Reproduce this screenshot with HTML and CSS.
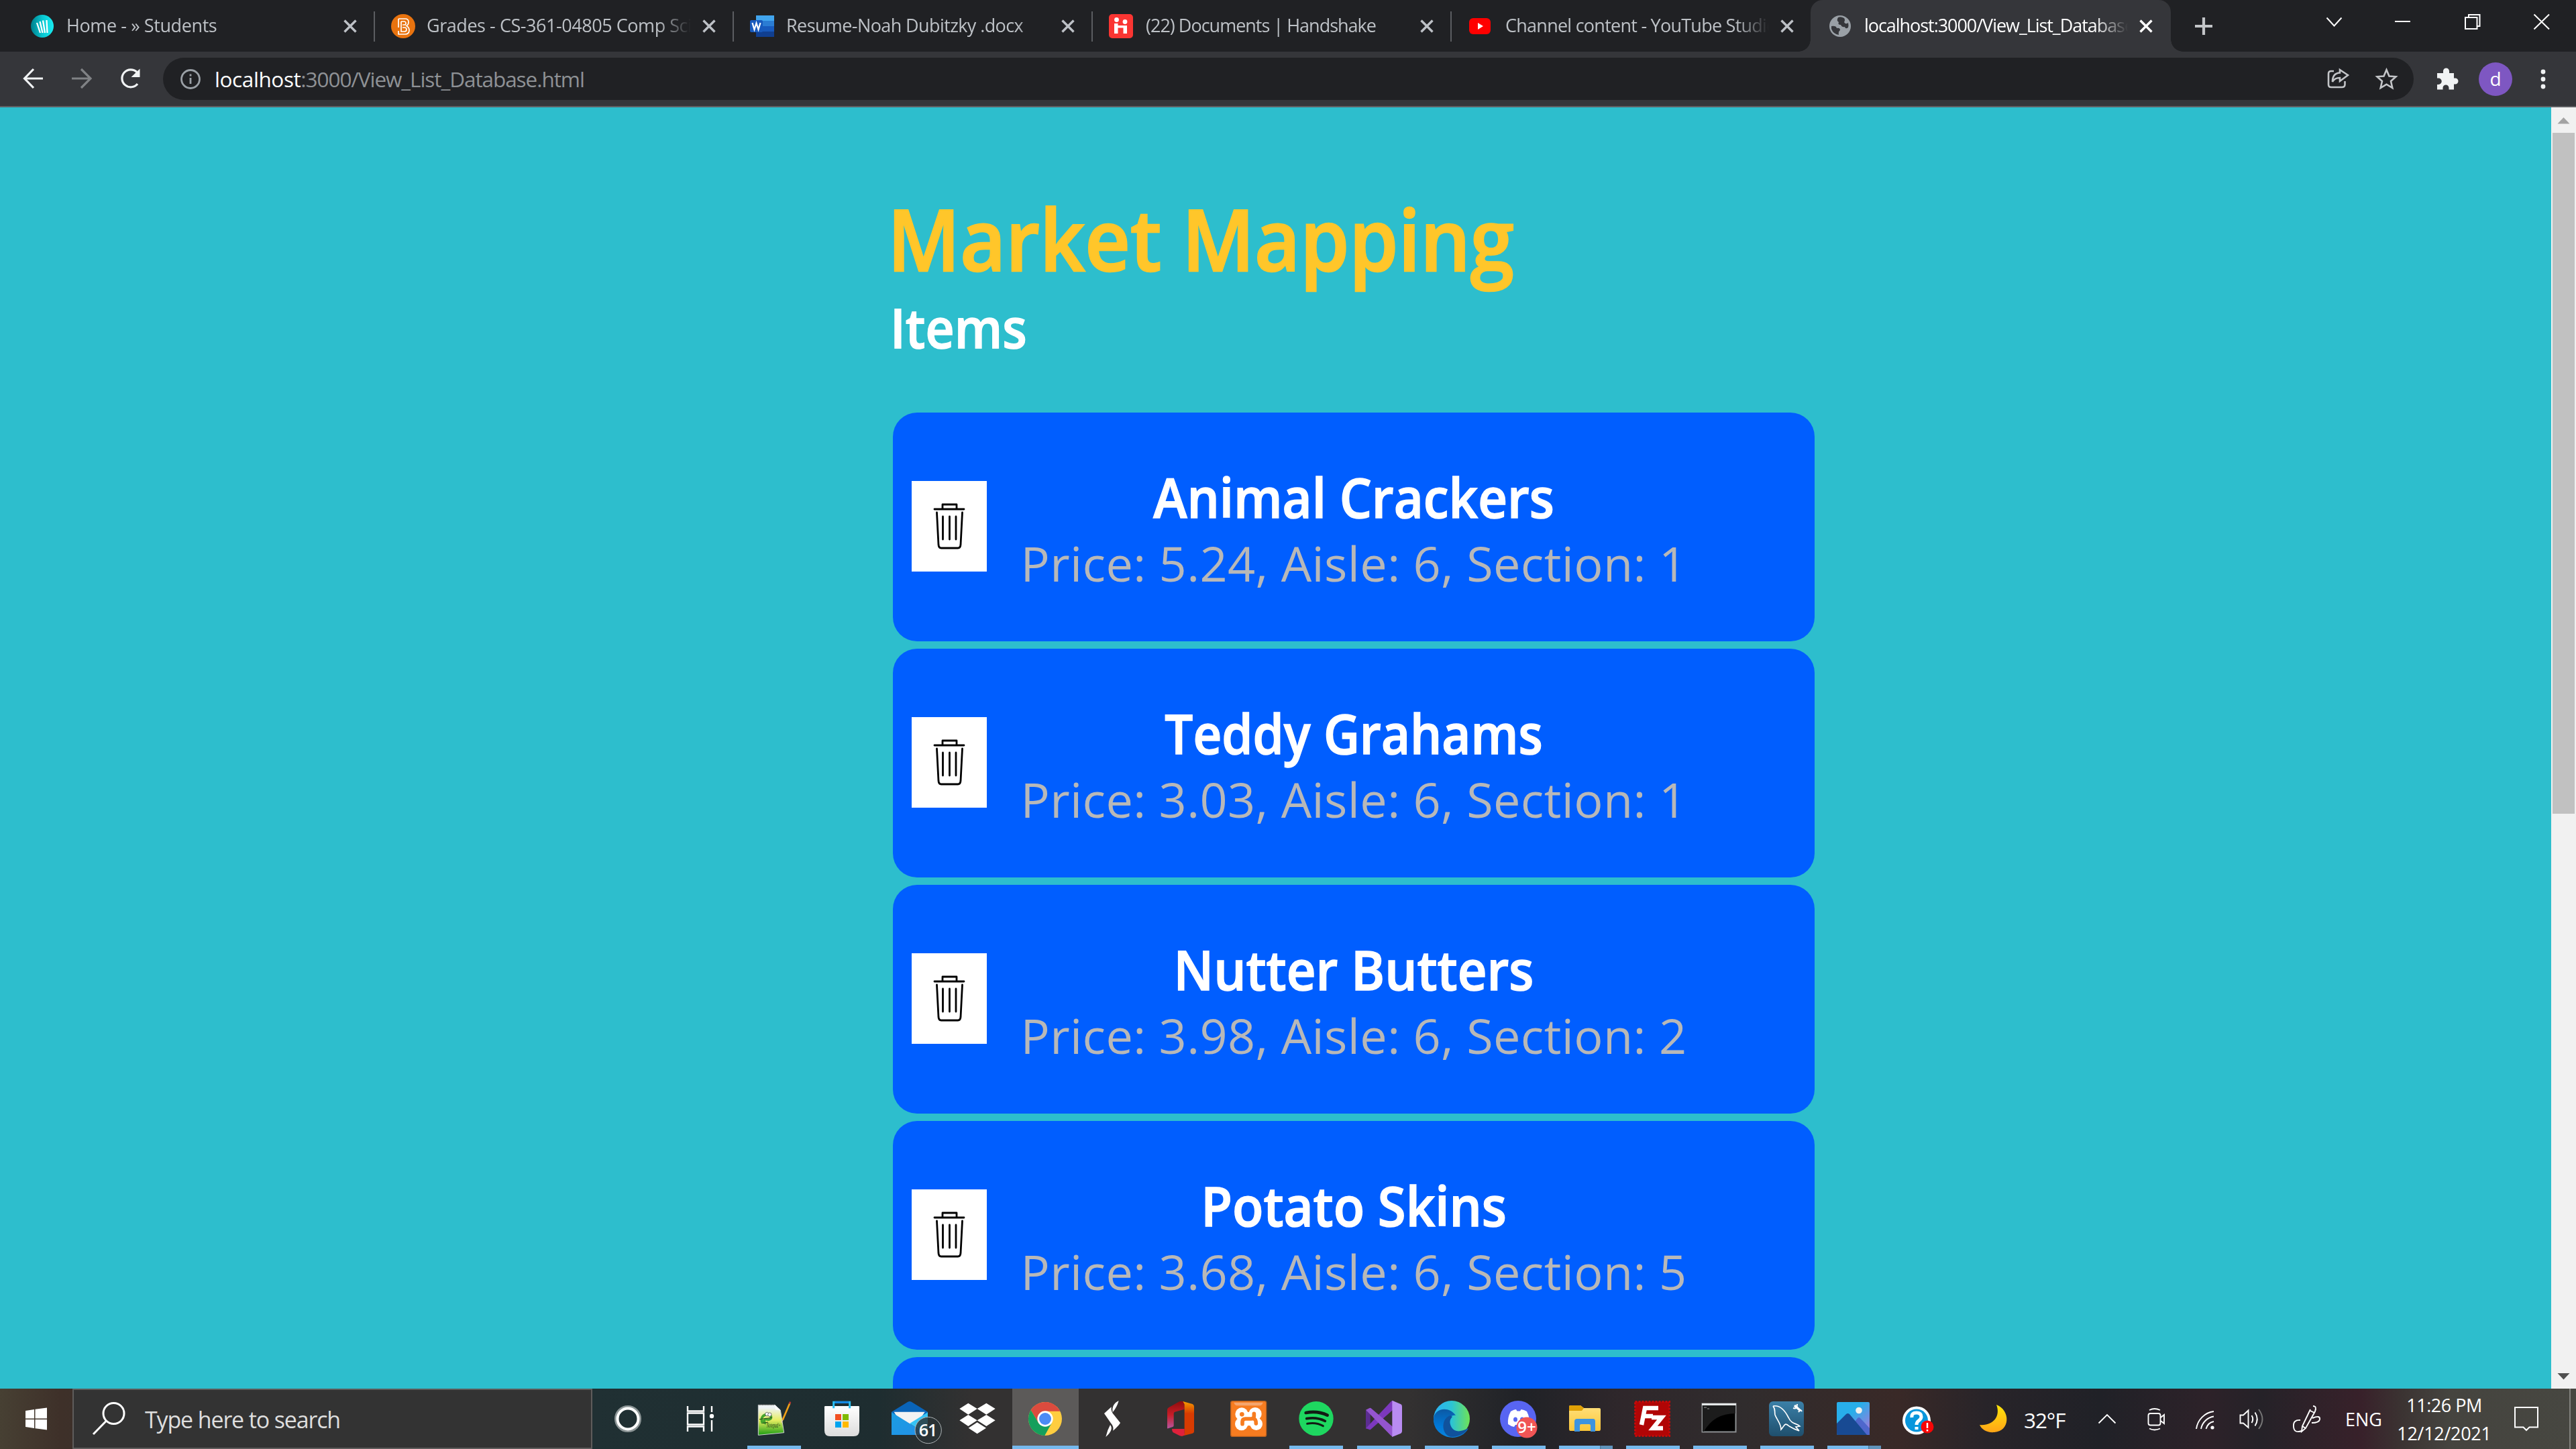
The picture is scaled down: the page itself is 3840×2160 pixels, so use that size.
FILE: index.html
```html
<!DOCTYPE html>
<html lang="en">
<head>
<meta charset="utf-8">
<title>localhost:3000/View_List_Database.html</title>
<link rel="stylesheet" href="styles.css">
</head>
<body>
<svg class="defs" width="0" height="0">
  <defs>
    <symbol id="close" viewBox="0 0 26 26"><path d="M4.500 4.500L21.500 21.500M21.500 4.500L4.500 21.500" stroke="currentColor" stroke-width="3.400"/></symbol>
    <symbol id="trash" viewBox="0 0 112 135"><g fill="none" stroke="#000" stroke-linecap="round" stroke-linejoin="round" stroke-width="2.800"><path d="M34 42H78M46 41V35H67V41" /><path d="M37.500 47L40 95Q40.500 100 44 100H69Q72.500 100 73 95L75.500 47"/><path d="M46.500 53V87M56.500 53V87M66 53V87"/></g></symbol>
    <linearGradient id="gTeal" x2="1"><stop offset="0" stop-color="#007f8c"/><stop offset=".5" stop-color="#08c5cf"/><stop offset="1" stop-color="#19edf2"/></linearGradient>
    <linearGradient id="gBag" x2="0" y2="1"><stop stop-color="#fff"/><stop offset="1" stop-color="#dcdcdc"/></linearGradient>
    <linearGradient id="gNote" x2="0" y2="1"><stop offset=".1" stop-color="#eef3f5"/><stop offset=".5" stop-color="#e7ee62"/><stop offset="1" stop-color="#1b9d12"/></linearGradient>
    <linearGradient id="gMail" x2="1" y2="1"><stop stop-color="#1b9de2"/><stop offset="1" stop-color="#2390e8"/></linearGradient>
    <linearGradient id="gOffice" x2="0" y2="1"><stop stop-color="#8e0d0d"/><stop offset=".5" stop-color="#c81d28"/><stop offset="1" stop-color="#b6569f"/></linearGradient>
    <linearGradient id="gOffice2" x2="0" y2="1"><stop stop-color="#f59a00"/><stop offset=".35" stop-color="#d83b01"/></linearGradient>
    <linearGradient id="gEdge" x2="1" y2="0"><stop stop-color="#2bb1f5"/><stop offset=".5" stop-color="#2cc3d4"/><stop offset="1" stop-color="#6fe356"/></linearGradient>
    <linearGradient id="gEdge2" x2="0" y2="1"><stop stop-color="#0c59a4"/><stop offset=".6" stop-color="#0078d7"/><stop offset="1" stop-color="#0a84dd"/></linearGradient>
    <linearGradient id="gSea" x2="0" y2="1"><stop stop-color="#3b80a8"/><stop offset="1" stop-color="#1f4f6d"/></linearGradient>
    <linearGradient id="gSky" x2="1" y2="1"><stop offset=".4" stop-color="#28aeea"/><stop offset="1" stop-color="#b172d8"/></linearGradient>
    <linearGradient id="gMoon" x2="0" y2="1"><stop stop-color="#ffe60a"/><stop offset="1" stop-color="#ffa417"/></linearGradient>
    <linearGradient id="gFolder" x2="0" y2="1"><stop stop-color="#ffe07d"/><stop offset="1" stop-color="#fcc739"/></linearGradient>
  </defs>
</svg>

<header class="browser">
  <div class="tabstrip">
    <div class="tab tab-first">
      <svg class="favicon" viewBox="0 0 36 36"><circle cx="17" cy="18" r="17" fill="url(#gTeal)"/><path d="M14 28L9 13M17.500 28L13.500 11M21 28L18 9.500M24.500 28L23.500 9" stroke="#fff" stroke-width="2.300"/></svg>
      <span class="title t-home">Home - » Students</span>
      <svg class="x"><use href="#close"/></svg>
    </div>
    <div class="tab">
      <svg class="favicon" viewBox="0 0 36 36"><circle cx="18" cy="18" r="18" fill="#e8730f"/><path d="M11 7H21Q26 7 26 12Q26 16 23 17.500Q27 20 27 24Q27 30 21 30H11V25M11 7V20M15 11V26H20Q23 26 23 23Q23 20 20 20H17M15 11H20Q22 11.500 22 13.500Q22 16 20 16H17" fill="none" stroke="#fff" stroke-width="1.700"/></svg>
      <span class="title t-grades">Grades - CS-361-04805 Comp Sci</span>
      <svg class="x"><use href="#close"/></svg>
    </div>
    <div class="tab">
      <svg class="favicon" viewBox="0 0 36 36"><path fill="#41a5ee" d="M9 2H36V10H9z"/><path fill="#2b7cd3" d="M9 10H36V18H9z"/><path fill="#185abd" d="M9 18H36V26H9z"/><path fill="#103f91" d="M9 26H36V34H9z"/><rect y="9" width="19" height="18" rx="2" fill="#185abd"/><path d="M3.500 13L6.500 23L9.500 13.500L12.500 23L15.500 13" fill="none" stroke="#fff" stroke-width="2.200"/></svg>
      <span class="title t-resume">Resume-Noah Dubitzky .docx</span>
      <svg class="x"><use href="#close"/></svg>
    </div>
    <div class="tab">
      <svg class="favicon" viewBox="0 0 36 36"><rect width="36" height="36" rx="5" fill="#fa3532"/><circle cx="11.500" cy="8.500" r="3.400" fill="#fff"/><circle cx="24" cy="11.500" r="3.400" fill="#fff"/><path d="M8 29V14H13.500V17H27V29H21.500V20.500H13.500V29z" fill="#fff"/></svg>
      <span class="title t-docs">(22) Documents | Handshake</span>
      <svg class="x"><use href="#close"/></svg>
    </div>
    <div class="tab tab-plain">
      <svg class="favicon" viewBox="0 0 36 36"><rect x="2" y="6" width="32" height="24" rx="6" fill="#f00"/><path d="M15 13L23 18L15 23z" fill="#fff"/></svg>
      <span class="title t-channel">Channel content - YouTube Studio</span>
      <svg class="x"><use href="#close"/></svg>
    </div>
    <div class="tab tab-active">
      <svg class="favicon" viewBox="0 0 36 36"><circle cx="20" cy="18" r="16" fill="#9aa0a6"/><path d="M7 18Q14 17 15 21Q20 20 20 24Q17 26 18 31Q10 30 7 22zM17 5Q14 10 18 12Q16 16 21 16Q23 20 27 19Q28 23 32 20Q33 17 32 13Q28 16 26 12Q28 9 26 6Q21 3 17 5z" fill="#35363a"/></svg>
      <span class="title t-local">localhost:3000/View_List_Database.html</span>
      <svg class="x"><use href="#close"/></svg>
    </div>
    <svg class="newtab" viewBox="0 0 28 28"><path d="M14 1V27M1 14H27" stroke="#c3c5c8" stroke-width="4.200"/></svg>
    <svg class="winctl" viewBox="3460 0 380 77" fill="none" stroke="#fff" stroke-width="2"><path d="M3468.500 26.500L3479.500 38.500L3490.500 26.500M3570 32H3593M3675 26H3692.500V43H3675zM3680 26V22H3696.500V39H3693M3777.500 21.500L3800 43.500M3800 21.500L3777.500 43.500"/></svg>
  </div>
  <div class="toolbar">
    <svg class="nav" viewBox="0 77 243 81" fill="none" stroke="#f1f3f4" stroke-width="3.200"><path d="M64 117H38M50 103L36.500 117L50 131"/><path stroke="#808285" d="M107 117H134M121 103L135 117L121 131"/><path d="M205 125A13 13 0 1 1 204 107.500"/><path d="M208.500 102.500V115H195.500z" fill="#f1f3f4" stroke="none"/></svg>
    <div class="omnibox">
      <svg class="info" viewBox="0 0 32 32" fill="none" stroke="#9aa0a6" stroke-width="2.800"><circle cx="16" cy="16" r="13.500"/><path d="M16 14V23M16 8.500V11.500"/></svg>
      <span class="url"><b>localhost</b>:3000/View_List_Database.html</span>
      <svg class="share" viewBox="3460 86 138 63" fill="none" stroke="#c3c5c8" stroke-width="2.600"><path d="M3479 106H3475Q3471 106 3471 110V126Q3471 130 3475 130H3491Q3495.500 130 3495.500 126V121M3488 104L3500 112L3488 121V116Q3480 116 3477 122Q3477 109 3488 108.500z"/><path d="M3557.500 104L3561.500 113.500L3571.500 114.300L3564 121L3566.300 131L3557.500 125.700L3548.700 131L3551 121L3543.500 114.300L3553.500 113.500z"/></svg>
    </div>
    <svg class="puzzle" viewBox="0 0 34 34"><path d="M2 8H11V5A4.500 4.500 0 0 1 20 5V8H27V15.500H29A4.500 4.500 0 0 1 29 24.500H27V32.500H19.500V30A4.500 4.500 0 0 0 10.500 30V32.500H2V25H4A4.500 4.500 0 0 0 4 15.500H2z" fill="#f1f3f4"/></svg>
    <span class="avatar">d</span>
    <svg class="dots" viewBox="0 0 10 32" fill="#f1f3f4"><circle cx="5" cy="5" r="3.400"/><circle cx="5" cy="16" r="3.400"/><circle cx="5" cy="27" r="3.400"/></svg>
  </div>
</header>

<div class="viewport">
  <main class="page">
    <h1>Market Mapping</h1>
    <h2>Items</h2>
    <ul class="items">
      <li class="item"><button class="trash"><svg><use href="#trash"/></svg></button><div class="info-col"><h3>Animal Crackers</h3><p>Price: 5.24, Aisle: 6, Section: 1</p></div></li>
      <li class="item"><button class="trash"><svg><use href="#trash"/></svg></button><div class="info-col"><h3 class="tight">Teddy Grahams</h3><p>Price: 3.03, Aisle: 6, Section: 1</p></div></li>
      <li class="item"><button class="trash"><svg><use href="#trash"/></svg></button><div class="info-col"><h3>Nutter Butters</h3><p>Price: 3.98, Aisle: 6, Section: 2</p></div></li>
      <li class="item"><button class="trash"><svg><use href="#trash"/></svg></button><div class="info-col"><h3>Potato Skins</h3><p>Price: 3.68, Aisle: 6, Section: 5</p></div></li>
      <li class="item"></li>
    </ul>
  </main>
  <div class="scrollbar">
    <svg class="arrow" viewBox="0 0 37 38"><path d="M9.500 24.500L18.500 15L27.500 24.500z" fill="#a3a3a3"/></svg>
    <div class="thumb"></div>
    <svg class="arrow arrow-down" viewBox="0 0 37 38"><path d="M9.500 15L18.500 24.500L27.500 15z" fill="#505050"/></svg>
  </div>
</div>

<footer class="taskbar">
  <svg class="start" viewBox="0 0 108 90"><path d="M38 33L51 31V44.500H38zM52.500 30.800L70 28.500V44.500H52.500zM38 46H51V59L38 57zM52.500 46H70V61.500L52.500 59.300z" fill="#fff"/></svg>
  <div class="search">
    <svg viewBox="110 2070 90 90" fill="none" stroke="#fff" stroke-width="3"><circle cx="169.500" cy="2107" r="15.500"/><path d="M158.500 2118L139 2138"/></svg>
    <span>Type here to search</span>
  </div>
  <svg class="cortana" viewBox="883 0 108 90" fill="none"><circle cx="936" cy="45" r="18.500" stroke="#8d9697" stroke-width="3"/><circle cx="936" cy="45" r="15.500" stroke="#fff" stroke-width="4"/></svg>
  <svg class="taskview" viewBox="991 0 114 90" fill="none" stroke="#fff" stroke-width="2.400"><path d="M1025 26V33.500H1049V26M1025 36.500H1049V53.500H1025zM1025 64V56.500H1049V64M1061 26V35M1061 47V64"/><circle cx="1061" cy="41" r="3.200" fill="#fff" stroke="none"/></svg>
  <div class="app open"><svg viewBox="-45 0 303 270"><path d="M31 73H105L130 96L146 197L31 208z" fill="url(#gNote)" stroke="#cfd3d3" stroke-width="3"/><path d="M34 72H102" stroke="#444" stroke-width="5" stroke-dasharray="3 4"/><path d="M105 73L108 94L130 96z" fill="#fff"/><path d="M50 155C38 130 55 115 72 116C98 118 90 142 72 138C55 132 52 150 66 156" fill="none" stroke="#45a52c" stroke-width="11"/><path d="M36 137L92 130M50 155L75 150" stroke="#274319" stroke-width="3"/><circle cx="70" cy="114" r="8" fill="#fff" stroke="#333" stroke-width="2"/><circle cx="82" cy="116" r="8" fill="#fff" stroke="#333" stroke-width="2"/><text x="68" y="174" class="notelabel" textLength="63" lengthAdjust="spacingAndGlyphs">Notepad+</text><path d="M172 65L140 140" stroke="#efa018" stroke-width="8"/><path d="M174 59L171 68" stroke="#b73535" stroke-width="8"/><path d="M140 140L133 152" stroke="#e8cfa0" stroke-width="5"/></svg></div>
  <div class="app"><svg viewBox="258 0 303 270"><path d="M327 82Q327 78 331 78H479Q483 78 483 82V188Q483 213 458 213H352Q327 213 327 188z" fill="url(#gBag)"/><path d="M368 88V61H440V88" fill="none" stroke="#2cc1f3" stroke-width="9"/><path d="M373 61H436" stroke="#1687e2" stroke-width="9"/><path fill="#f25022" d="M375 114H402V141H375z"/><path fill="#7fba00" d="M408 114H435V141H408z"/><path fill="#00a4ef" d="M375 147H402V174H375z"/><path fill="#ffb900" d="M408 147H435V174H408z"/></svg></div>
  <div class="app"><svg viewBox="561 0 303 270"><path d="M627 104L700 59Q708 55 716 59L789 104V130H627z" fill="#0a64b8"/><path d="M638 104H776L752 140L708 160L660 140z" fill="#f3f3f3"/><path d="M627 106L708 156L789 207H627z" fill="url(#gMail)"/><path d="M789 106L708 156L789 207z" fill="#36c4f5"/><circle cx="791" cy="186" r="59" fill="#2b3336" fill-opacity=".82" stroke="#aeb4b6" stroke-width="3"/><text x="789" y="212" class="badge61">61</text></svg></div>
  <div class="app"><svg viewBox="864 0 303 270" fill="#fff"><path d="M970 65L1010 90L970 116L931 90zM1051 65L1091 90L1051 116L1010 90zM970 117L1010 142L970 168L931 142zM1051 117L1091 142L1051 168L1010 142zM1010 151L1050 176L1010 202L971 176z"/></svg></div>
  <div class="app current"><svg viewBox="1167 0 303 270"><circle cx="1314" cy="135" r="75" fill="#ffcd40"/><path d="M1250 96A75 75 0 0 1 1381 101H1314L1284 153z" fill="#db4b3e"/><path d="M1250 96A75 75 0 0 0 1312 210L1344 152L1314 135L1284 153z" fill="#159f5c"/><circle cx="1314" cy="135" r="35" fill="#fff"/><circle cx="1314" cy="135" r="27" fill="#4b8bf5"/></svg></div>
  <div class="app"><svg viewBox="-60 0 303 270" fill="#fff"><path d="M48 111L80 82Q77 102 92 118L120 153Q117 162 88 188Q91 168 79 156zM86 106Q80 70 113 54Q105 83 86 106zM55 216Q62 185 75 162Q92 184 55 216z"/></svg></div>
  <div class="app"><svg viewBox="243 0 303 270"><path d="M330 176V95Q330 88 337 84L384 58Q394 54 407 60V92L364 104Q359 106 359 112V165Q359 169 355 171L334 178Q330 179 330 176z" fill="url(#gOffice)"/><path d="M400 57L443 69Q450 72 450 80V192Q450 198 443 200L392 213L407 200V70z" fill="url(#gOffice2)"/><path d="M351 180H407V208Q397 215 386 211L356 196Q351 192 351 180z" fill="#df213b"/></svg></div>
  <div class="app"><svg viewBox="546 0 303 270"><rect x="614" y="56" width="159" height="158" rx="8" fill="#f77c20" stroke="#b7601f" stroke-width="4"/><path d="M628 62H758Q755 76 740 76H646Q631 76 628 62z" fill="#f5a56d"/><g fill="#fff"><circle cx="663" cy="114" r="29"/><circle cx="723" cy="113" r="29"/><circle cx="662" cy="158" r="29"/><circle cx="728" cy="158" r="28"/><path d="M660 104H726V166H660z"/></g><path d="M693 80V104M695 166V192" stroke="#f77c20" stroke-width="7"/><circle cx="664" cy="115" r="10" fill="#f77c20"/><path d="M666 158V148Q666 135 680 135H706Q718 135 718 124V112M716 135Q727 136 727 156" fill="none" stroke="#f77c20" stroke-width="17" stroke-linecap="round"/></svg></div>
  <div class="app open"><svg viewBox="849 0 303 270"><circle cx="996" cy="134" r="77" fill="#1ed760"/><g fill="none" stroke="#121b14" stroke-linecap="round"><path d="M950 108Q1003 98 1046 119" stroke-width="14"/><path d="M953 134Q999 126 1036 145" stroke-width="11"/><path d="M956 157Q995 149 1027 167" stroke-width="9"/></g></svg></div>
  <div class="app open"><svg viewBox="1152 0 303 270"><path d="M1218 96L1238 105V165L1218 180z" fill="#5c2d91"/><path d="M1218 178L1332 56Q1336 53 1338 56V96L1240 182Q1236 185 1232 182z" fill="#7c38bd"/><path d="M1218 95L1234 87Q1239 85 1244 90L1338 170V216L1328 208z" fill="#9455cf"/><path d="M1336 53L1375 70Q1380 73 1380 80V190Q1380 197 1375 200L1336 216z" fill="#b98cf2"/></svg></div>
  <div class="app w100 open"><svg viewBox="0 0 100 90"><circle cx="49" cy="45" r="27" fill="url(#gEdge)"/><path d="M22 46C22 29 45 25 55 40C44 37 38 58 51 63C58 67 67 65 74 59C65 75 46 76 34 68Q22 60 22 46z" fill="url(#gEdge2)"/><path d="M47 40C31 45 34 73 51 72C61 71 70 66 73 59C63 65 53 65 49 58C45 51 46 46 50 42z" fill="#10529c"/></svg></div>
  <div class="app w100 open"><svg viewBox="0 0 100 90"><circle cx="48" cy="45" r="27" fill="#5865f2"/><path d="M37 34Q42 31 45 31L46.500 33.500H51L52.500 31Q57 31.500 61 34Q66 44 65 53Q60 57 56 57L54 54H44L42 57Q37 56 33 53Q32 43 37 34z" fill="#fff"/><ellipse cx="44" cy="46" rx="3" ry="3.500" fill="#5865f2"/><ellipse cx="54" cy="46" rx="3" ry="3.500" fill="#5865f2"/><circle cx="61" cy="58" r="15.500" fill="#f05555"/><text x="61" y="66" class="badge9">9+</text></svg></div>
  <div class="app w100 open group"><svg viewBox="0 0 100 90"><path d="M24 27Q24 25 26 25H41L46 29H69Q71 29 71 31V60Q71 63 69 63H26Q24 63 24 60z" fill="url(#gFolder)"/><path d="M24 33V27Q24 25 26 25H41L46 29L43 33z" fill="#e0a106"/><path d="M32 64V49Q32 45 36 45H60Q63 45 63 49V64H56V55Q56 53 54 53H42Q40 53 40 55V64z" fill="#3d94df"/></svg></div>
  <div class="app w100 open"><svg viewBox="0 0 100 90"><rect x="22.500" y="19.500" width="51" height="51" fill="#b10505" stroke="#c50909" stroke-width="3" stroke-dasharray="3 2"/><path d="M32 54L37 29H57M35 41H49M47 43H62L49 59H64" fill="none" stroke="#fff" stroke-width="6.500"/></svg></div>
  <div class="app w100 open"><svg viewBox="0 0 100 90"><rect x="22.500" y="22.500" width="50" height="42" fill="#000" stroke="#8d9092" stroke-width="2"/><path d="M23 23H72V37Q40 37 25 64H23z" fill="#1c1c1c"/><path d="M22 23.500H73" stroke="#e4e7e8" stroke-width="3"/><path d="M25 28H29M30 30H33" stroke="#999"/></svg></div>
  <div class="app w100 open"><svg viewBox="0 0 100 90"><rect x="22" y="19" width="52" height="52" rx="6" fill="url(#gSea)"/><path d="M28 26C39 24 46 33 51 43C56 54 63 51 68 56L62 57L67 63M52 56C45 49 45 56 40 61C40 52 34 47 31 39C30 34 32 31 28 26M52 56C57 59 61 61 67 63" fill="none" stroke="#fff" stroke-width="1.700"/><path d="M60 25L69 33" stroke="#fff" stroke-width="3.500"/><path d="M58 29Q64 31 64 23M66 35Q69 30 71 34" fill="none" stroke="#fff" stroke-width="2"/></svg></div>
  <div class="app w100 open group"><svg viewBox="0 0 100 90"><rect x="23" y="20" width="49" height="49" rx="2" fill="url(#gSky)"/><path d="M43 58L54 44Q56 42 58 44L72 59V69H50z" fill="#4f67cc"/><path d="M23 52L37 38Q39.500 36 42 38L68 69H25Q23 69 23 67z" fill="#184a93"/><circle cx="56" cy="32.500" r="4.800" fill="#f2f2ee"/></svg></div>
  <div class="app w100"><svg viewBox="0 0 100 90"><circle cx="42" cy="47.500" r="21" fill="#fff"/><circle cx="42" cy="47.500" r="17" fill="#0996dc"/><path d="M35 43Q34 36 42 36Q49 36 49 42Q49 45 45 48Q42 50 42 54M42 57V61" fill="none" stroke="#fff" stroke-width="5"/><circle cx="58" cy="57" r="9.500" fill="#f80606"/><path d="M58 51V59M58 61V63.500" stroke="#fff" stroke-width="2.500"/></svg></div>
  <svg class="moon" viewBox="2915 0 102 90"><path d="M2976 24C2997 32 2997 63 2973 65C2962 66 2954 61 2951 54C2970 56 2983 42 2976 24z" fill="url(#gMoon)"/></svg>
  <span class="temp">32°F</span>
  <svg class="tray" viewBox="3100 0 390 90" fill="none" stroke="#fff" stroke-width="1.900"><path d="M3128.500 51.500L3141 39L3153.500 51.500"/><rect x="3202.500" y="37" width="18" height="17.500" rx="3"/><path d="M3221 43L3226 39V52L3221 48M3204 32Q3211.500 28 3220 32M3204 59.500Q3211.500 63.500 3220 59.500"/><path d="M3274 60A30 30 0 0 1 3300 34M3281 60A23 23 0 0 1 3300 41.500M3288.500 60A15 15 0 0 1 3300 49"/><circle cx="3298" cy="58" r="2.600" fill="#fff" stroke="none"/><path d="M3339.500 39.500H3344L3351.500 32.500V58L3344 51.500H3339.500zM3356.500 40Q3360 45.500 3356.500 51M3361.500 35.500Q3368 45.500 3361.500 55.500"/><path d="M3367 31Q3378 45.500 3367 60" stroke="#777"/><path d="M3448 26Q3454 26 3451 34L3437 59L3431 64L3432 56L3444 31M3444 33L3450 36M3432 56L3437 59M3431 63Q3420 67 3419 57Q3418 46 3429 47M3447 44Q3459 39 3458 46Q3457 51 3446 51"/></svg>
  <span class="lang">ENG</span>
  <div class="clock"><span>11:26 PM</span><span class="date">12/12/2021</span></div>
  <svg class="notify" viewBox="3725 0 105 90" fill="none" stroke="#fff" stroke-width="2"><path d="M3749 28H3783V57.500H3770.500L3766 62L3761.500 57.500H3749z"/></svg>
</footer>
</body>
</html>
```
FILE: styles.css
```css
* { box-sizing: border-box; }
body {
  margin: 0;
  width: 3840px;
  height: 2160px;
  overflow: hidden;
  display: flex;
  flex-direction: column;
  font-family: "Open Sans", "Noto Sans", sans-serif;
  background: #2dbecd;
}
svg { display: block; flex: none; }
.defs { position: absolute; }

/* browser chrome */
.browser { flex: none; height: 160px; background: #35363a; border-bottom: 2px solid #5f6064; }
.tabstrip { display: flex; align-items: stretch; height: 77px; padding-left: 22px; background: #202124; }
.tab {
  position: relative;
  flex: none;
  display: flex;
  align-items: center;
  width: 535px;
  padding: 0 24px;
  color: #bdc1c6;
  font-size: 27px;
}
.tab-first { width: 537px; }
.tab::after { content: ""; position: absolute; right: 0; top: 17px; width: 2px; height: 45px; background: #5b5d61; }
.tab-plain { padding-right: 22px; }
.tab-plain::after { display: none; }
.favicon { width: 36px; height: 36px; }
.title {
  flex: 1;
  margin: 0 14px 2px 17px;
  overflow: hidden;
  white-space: nowrap;
  -webkit-mask-image: linear-gradient(to right, #000 calc(100% - 50px), transparent);
  mask-image: linear-gradient(to right, #000 calc(100% - 50px), transparent);
}
.t-home { letter-spacing: -0.4px; }
.t-grades { letter-spacing: -0.45px; }
.t-resume { letter-spacing: -0.6px; margin-left: 18px; }
.t-docs { letter-spacing: -1px; margin-left: 19px; }
.t-channel { letter-spacing: -0.75px; margin-left: 20px; }
.t-local { letter-spacing: -1.050px; margin-left: 20px; }
.x { width: 26px; height: 26px; }
.tab-active { width: 537px; background: #35363a; color: #fff; border-radius: 18px 18px 0 0; }
.tab-active::before, .tab-active::after {
  content: "";
  position: absolute;
  top: auto;
  bottom: 0;
  width: 18px;
  height: 18px;
}
.tab-active::before { left: -18px; background: radial-gradient(circle at 0 0, #202124 17.500px, #35363a 18px); }
.tab-active::after { right: -18px; background: radial-gradient(circle at 100% 0, #202124 17.500px, #35363a 18px); }
.newtab { width: 28px; height: 28px; align-self: center; margin-left: 35px; }
.winctl { width: 380px; height: 77px; margin-left: auto; }

.toolbar { display: flex; align-items: center; height: 81px; }
.nav { width: 243px; height: 81px; }
.omnibox { flex: none; display: flex; align-items: center; width: 3355px; height: 63px; border-radius: 32px; background: #202124; }
.info { width: 32px; height: 32px; margin-left: 25px; }
.url { margin: 0 0 1px 20px; font-size: 31.500px; color: #8e9195; white-space: nowrap; letter-spacing: -1.070px; }
.url b { font-weight: 400; color: #fff; letter-spacing: -0.4px; }
.share { width: 138px; height: 63px; margin-left: auto; }
.puzzle { width: 34px; height: 34px; margin-left: 33px; }
.avatar {
  flex: none;
  width: 50px;
  height: 50px;
  margin-left: 30px;
  border-radius: 50%;
  background: #7e57c2;
  color: #fff;
  font-size: 28px;
  line-height: 48px;
  text-align: center;
}
.dots { width: 10px; height: 32px; margin-left: 41px; }

/* page */
.viewport { flex: none; display: flex; height: 1910px; overflow: hidden; }
.page { width: 3803px; height: 1910px; overflow: hidden; padding: 123px 0 0 1331px; }
h1, h2, h3, p, ul { margin: 0; padding: 0; white-space: nowrap; }
h1, h2, h3 { font-weight: 600; -webkit-text-stroke: 1.500px currentColor; }
h1, h2 { transform-origin: left center; }
h1 { margin-left: -8px; font-size: 126px; line-height: 145px; color: #ffc62a; transform: scaleX(0.932); -webkit-text-stroke-width: 2.500px; }
h2 { margin-left: -4px; font-size: 81px; line-height: 119px; color: #fff; transform: scaleX(0.925); }
.items { display: flex; flex-direction: column; gap: 11px; width: 1374px; margin-top: 68px; list-style: none; }
.item {
  display: grid;
  grid-template-columns: 112px 1fr 112px;
  align-items: center;
  height: 341px;
  padding: 0 28px;
  border-radius: 36px;
  background: #005eff;
}
.trash { width: 112px; height: 135px; margin-top: -2px; padding: 0; border: 0; background: #fff; }
.trash svg { width: 112px; height: 135px; }
.info-col { text-align: center; padding-top: 13px; }
h3 { font-size: 81px; line-height: 94px; color: #fff; transform: scaleX(0.939); }
.tight { transform: scaleX(0.918); }
p { font-size: 72px; line-height: 103px; letter-spacing: 0.380px; color: #b8b8b8; }

.scrollbar { flex: none; display: flex; flex-direction: column; width: 37px; background: #f1f1f1; }
.arrow { width: 37px; height: 38px; }
.thumb { height: 1015px; margin: 0 2px; background: #c1c1c1; }
.arrow-down { margin-top: auto; }

/* taskbar */
.taskbar {
  flex: none;
  display: flex;
  height: 90px;
  color: #fff;
  background: linear-gradient(to right, #474033 0, #3e3029 90px, #203033 890px, #1e2d30 1310px, #333131 1450px, #333131 2100px, #202227 2270px, #2f272b 2420px, #302c2d 2600px, #392927 2830px, #282429 2960px, #202127 3130px, #2d2229 3290px, #252228 3370px, #38212a 3520px, #3b3332 3580px, #45443f 3650px, #474741 3840px);
}
.start { width: 108px; height: 90px; }
.search {
  flex: none;
  display: flex;
  align-items: center;
  width: 775px;
  border: 2px solid #5e5c5b;
  background: #333;
  color: #dedede;
  font-size: 34px;
  letter-spacing: -1.150px;
}
.search svg { width: 90px; height: 90px; }
.search span { margin: 2px 0 0 16px; white-space: nowrap; }
.cortana { width: 108px; height: 90px; }
.taskview { width: 114px; height: 90px; }
.app { position: relative; flex: none; width: 101px; height: 90px; }
.w100 { width: 100px; }
.app svg { width: 100%; height: 90px; position: relative; }
.open::after { content: ""; position: absolute; left: 9px; bottom: 0; width: 80px; height: 5px; background: #76b9ed; }
.group::after { background: linear-gradient(to right, #76b9ed 61px, #4a7391 61px, #6093bb 63px); }
.current { background: #5c5a59; box-shadow: inset -2px 0 #333131; }
.current::after { content: ""; position: absolute; left: 0; bottom: 0; width: 99px; height: 5px; background: #76b9ed; }
.notelabel { font: italic 30px "Liberation Serif", serif; fill: #1d3a10; }
.badge61 { font: 600 76px "Open Sans", sans-serif; fill: #fff; text-anchor: middle; letter-spacing: -4px; }
.badge9 { font: 600 24px "Open Sans", sans-serif; fill: #fff; text-anchor: middle; }
.moon { width: 102px; height: 90px; }
.temp { width: 83px; font-size: 31.500px; line-height: 94px; letter-spacing: -1.100px; white-space: nowrap; }
.tray { width: 390px; height: 90px; }
.lang { width: 72px; padding-left: 6px; font-size: 27px; line-height: 91px; white-space: nowrap; }
.clock { display: flex; flex-direction: column; align-items: center; width: 163px; padding-top: 4px; font-size: 27px; line-height: 42px; letter-spacing: -0.5px; white-space: nowrap; }
.date { letter-spacing: -0.3px; }
.notify { width: 105px; height: 90px; border-right: 2px solid #81817d; box-sizing: content-box; }
```
